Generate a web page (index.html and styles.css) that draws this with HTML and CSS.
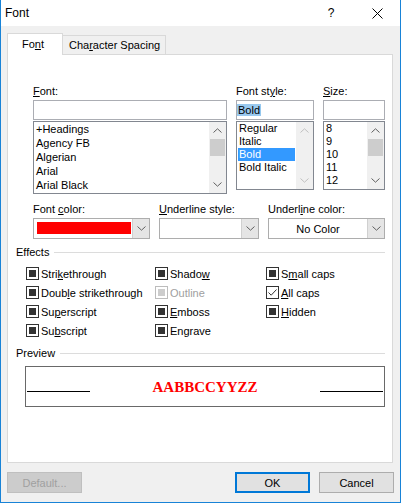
FILE: index.html
```html
<!DOCTYPE html>
<html>
<head>
<meta charset="utf-8">
<title>Font</title>
<link rel="stylesheet" href="styles.css">
</head>
<body>
<div class="window">
  <div class="titlebar">
    <span class="title">Font</span>
    <span class="tb-btn">?</span>
    <span class="tb-btn"><svg width="11" height="11" viewBox="0 0 11 11"><path d="M0.5 0.5L10.5 10.5M10.5 0.5L0.5 10.5" stroke="#000" stroke-width="1" fill="none"/></svg></span>
  </div>
  <div class="content">
    <div class="tabs">
      <div class="tab active">Fo<u>n</u>t</div>
      <div class="tab">Cha<u>r</u>acter Spacing</div>
    </div>
    <div class="panel">
      <div class="font-grid">
        <div class="field">
          <div class="lbl"><u>F</u>ont:</div>
          <div class="input"></div>
          <div class="list list-font">
            <div class="items">
              <div class="item">+Headings</div>
              <div class="item">Agency FB</div>
              <div class="item">Algerian</div>
              <div class="item">Arial</div>
              <div class="item">Arial Black</div>
            </div>
            <div class="sb">
              <div class="sb-btn"><svg width="9" height="5" viewBox="0 0 9 5"><path d="M0.5 4.5L4.5 0.8L8.5 4.5" stroke="#606060" fill="none"/></svg></div>
              <div class="sb-track"><div class="sb-thumb"></div></div>
              <div class="sb-btn"><svg width="9" height="5" viewBox="0 0 9 5"><path d="M0.5 0.5L4.5 4.2L8.5 0.5" stroke="#606060" fill="none"/></svg></div>
            </div>
          </div>
        </div>
        <div class="field">
          <div class="lbl">Font st<u>y</u>le:</div>
          <div class="input"><span class="sel">Bold</span></div>
          <div class="list list-small">
            <div class="items">
              <div class="item">Regular</div>
              <div class="item">Italic</div>
              <div class="item selected">Bold</div>
              <div class="item">Bold Italic</div>
            </div>
            <div class="sb">
              <div class="sb-btn"><svg width="9" height="5" viewBox="0 0 9 5"><path d="M0.5 4.5L4.5 0.8L8.5 4.5" stroke="#c0c0c0" fill="none"/></svg></div>
              <div class="sb-track"></div>
              <div class="sb-btn"><svg width="9" height="5" viewBox="0 0 9 5"><path d="M0.5 0.5L4.5 4.2L8.5 0.5" stroke="#c0c0c0" fill="none"/></svg></div>
            </div>
          </div>
        </div>
        <div class="field">
          <div class="lbl"><u>S</u>ize:</div>
          <div class="input"></div>
          <div class="list list-small">
            <div class="items">
              <div class="item">8</div>
              <div class="item">9</div>
              <div class="item">10</div>
              <div class="item">11</div>
              <div class="item">12</div>
            </div>
            <div class="sb">
              <div class="sb-btn"><svg width="9" height="5" viewBox="0 0 9 5"><path d="M0.5 4.5L4.5 0.8L8.5 4.5" stroke="#606060" fill="none"/></svg></div>
              <div class="sb-track"><div class="sb-thumb"></div></div>
              <div class="sb-btn"><svg width="9" height="5" viewBox="0 0 9 5"><path d="M0.5 0.5L4.5 4.2L8.5 0.5" stroke="#606060" fill="none"/></svg></div>
            </div>
          </div>
        </div>
      </div>

      <div class="combo-grid">
        <div class="field">
          <div class="lbl">Font <u>c</u>olor:</div>
          <div class="combo">
            <div class="combo-field"><span class="swatch"></span></div>
            <div class="combo-btn"><svg width="9" height="5" viewBox="0 0 9 5"><path d="M0.5 0.5L4.5 4.2L8.5 0.5" stroke="#606060" fill="none"/></svg></div>
          </div>
        </div>
        <div class="field">
          <div class="lbl"><u>U</u>nderline style:</div>
          <div class="combo">
            <div class="combo-field"></div>
            <div class="combo-btn"><svg width="9" height="5" viewBox="0 0 9 5"><path d="M0.5 0.5L4.5 4.2L8.5 0.5" stroke="#606060" fill="none"/></svg></div>
          </div>
        </div>
        <div class="field">
          <div class="lbl">Underl<u>i</u>ne color:</div>
          <div class="combo">
            <div class="combo-field">No Color</div>
            <div class="combo-btn"><svg width="9" height="5" viewBox="0 0 9 5"><path d="M0.5 0.5L4.5 4.2L8.5 0.5" stroke="#606060" fill="none"/></svg></div>
          </div>
        </div>
      </div>

      <div class="group-head"><span>Effects</span><span class="rule"></span></div>
      <div class="effects">
        <div class="cb-item"><span class="cb ind"></span><span>Stri<u>k</u>ethrough</span></div>
        <div class="cb-item"><span class="cb ind"></span><span>Shado<u>w</u></span></div>
        <div class="cb-item"><span class="cb ind"></span><span>S<u>m</u>all caps</span></div>

        <div class="cb-item"><span class="cb ind"></span><span>Doub<u>l</u>e strikethrough</span></div>
        <div class="cb-item"><span class="cb ind dis"></span><span class="dis-text">Outline</span></div>
        <div class="cb-item"><span class="cb chk"><svg width="11" height="11" viewBox="0 0 11 11"><path d="M1.5 5.5L4.2 8.2L9.5 2.5" stroke="#333" stroke-width="1" fill="none"/></svg></span><span><u>A</u>ll caps</span></div>

        <div class="cb-item"><span class="cb ind"></span><span>Su<u>p</u>erscript</span></div>
        <div class="cb-item"><span class="cb ind"></span><span><u>E</u>mboss</span></div>
        <div class="cb-item"><span class="cb ind"></span><span><u>H</u>idden</span></div>

        <div class="cb-item"><span class="cb ind"></span><span>Su<u>b</u>script</span></div>
        <div class="cb-item"><span class="cb ind"></span><span>En<u>g</u>rave</span></div>
        <div class="cb-item"></div>
      </div>

      <div class="group-head"><span>Preview</span><span class="rule"></span></div>
      <div class="preview">
        <div class="pline"></div>
        <div class="ptext">AABBCCYYZZ</div>
        <div class="pline"></div>
      </div>
    </div>

    <div class="buttons">
      <button class="btn disabled">Default...</button>
      <span class="spacer"></span>
      <button class="btn ok">OK</button>
      <button class="btn">Cancel</button>
    </div>
  </div>
</div>
</body>
</html>
```

FILE: styles.css
```css
* { box-sizing: border-box; }

body {
  margin: 0;
  font-family: "Liberation Sans", Arial, sans-serif;
  font-size: 11px;
  color: #000;
  background: #fff;
}

u { text-decoration: underline; text-underline-offset: 1px; }

.window {
  width: 401px;
  height: 503px;
  border: 1px solid #1883d7;
  border-top: 0;
  background: #f0f0f0;
  display: flex;
  flex-direction: column;
}

.titlebar {
  height: 26px;
  flex: none;
  background: #fff;
  display: flex;
  align-items: center;
  padding-left: 4px;
}

.title { flex: 1; font-size: 12px; }

.tb-btn {
  width: 46px;
  height: 26px;
  display: flex;
  align-items: center;
  justify-content: center;
  font-size: 12px;
}

.content {
  flex: 1;
  padding: 7px 7px 0 6px;
  display: flex;
  flex-direction: column;
}

.tabs {
  display: flex;
  align-items: flex-end;
  height: 21px;
  flex: none;
}

.tab {
  height: 19px;
  width: 104px;
  margin-left: -1px;
  border: 1px solid #d9d9d9;
  border-bottom: 0;
  background: #f0f0f0;
  padding-left: 6px;
  line-height: 19px;
  white-space: nowrap;
}

.tab.active {
  width: 56px;
  height: 22px;
  margin-left: 0;
  margin-bottom: -1px;
  background: #fff;
  padding-left: 14px;
  line-height: 21px;
  position: relative;
  z-index: 1;
}

.panel {
  height: 409px;
  flex: none;
  border: 1px solid #d9d9d9;
  background: #fff;
  padding: 28px 7px 0 8px;
}

.font-grid {
  display: grid;
  grid-template-columns: 194px 78px 62px;
  column-gap: 9px;
  margin-left: 17px;
}

.lbl {
  height: 16px;
  line-height: 16px;
  margin-bottom: 1px;
  white-space: nowrap;
}

.input {
  height: 20px;
  border: 1px solid #abadb3;
  margin-bottom: 1px;
  padding: 3px 0 0 0;
  background: #fff;
}

.sel {
  display: inline-block;
  height: 12px;
  line-height: 12px;
  background: #99c9ef;
  padding: 0 1px;
  vertical-align: top;
}

.list {
  display: flex;
  border: 1px solid #828790;
  background: #fff;
}

.list-font { height: 73px; }
.list-small { height: 69px; }

.items {
  flex: 1;
  padding: 0 1px;
  overflow: hidden;
  white-space: nowrap;
}

.list-font .item { height: 14px; line-height: 14px; padding-left: 1px; }
.list-small .item { height: 13px; line-height: 13px; padding-left: 1px; }

.item.selected { background: #3399ff; color: #fff; }

.sb {
  width: 17px;
  flex: none;
  display: flex;
  flex-direction: column;
  background: #f0f0f0;
}

.sb-btn {
  height: 17px;
  display: flex;
  align-items: center;
  justify-content: center;
}

.sb-btn svg { display: block; }

.sb-track { flex: 1; }

.sb-thumb {
  height: 17px;
  margin: 0 1px;
  background: #cdcdcd;
}

.combo-grid {
  display: grid;
  grid-template-columns: 117px 100px 117px;
  column-gap: 9px;
  margin: 7px 0 0 17px;
}

.combo {
  height: 21px;
  border: 1px solid #adadad;
  display: flex;
  background: #fff;
}

.combo-field {
  flex: 1;
  display: flex;
  align-items: center;
  justify-content: center;
}

.swatch {
  flex: 1;
  align-self: stretch;
  background: #ff0000;
  margin: 3px 1px 4px 3px;
}

.combo-btn {
  width: 17px;
  flex: none;
  background: #e5e5e5;
  border-left: 1px solid #d0d0d0;
  display: flex;
  align-items: center;
  justify-content: center;
}

.combo-btn svg { display: block; }

.group-head {
  display: flex;
  align-items: center;
  height: 16px;
  margin-top: 5px;
}

.rule {
  flex: 1;
  height: 1px;
  background: #dcdcdc;
  margin-left: 5px;
}

.effects {
  display: grid;
  grid-template-columns: 129px 111px 1fr;
  grid-auto-rows: 19px;
  margin: 4px 0 0 10px;
}

.cb-item {
  display: flex;
  align-items: center;
  gap: 2px;
  white-space: nowrap;
}

.cb {
  width: 13px;
  height: 13px;
  flex: none;
  border: 1px solid #333;
  background: #fff;
  padding: 2px;
}

.cb.ind::after {
  content: "";
  display: block;
  width: 7px;
  height: 7px;
  background: #333;
}

.cb.dis { border-color: #bcbcbc; }
.cb.dis::after { background: #cccccc; }

.cb.chk { padding: 0; }
.cb.chk svg { display: block; }

.dis-text { color: #a0a0a0; }

.preview {
  height: 41px;
  margin: 5px 0 0 9px;
  border: 1px solid #696969;
  padding: 11px 1px 0 1px;
  display: flex;
  align-items: baseline;
  justify-content: space-between;
}

.pline {
  width: 63px;
  height: 1px;
  background: #000;
}

.ptext {
  font-family: "Liberation Serif", "Times New Roman", serif;
  font-weight: bold;
  font-size: 15px;
  line-height: 18px;
  color: #ff0000;
}

.buttons {
  display: flex;
  gap: 9px;
  margin-top: 9px;
  margin-right: -1px;
}

.spacer { flex: 1; }

.btn {
  width: 75px;
  height: 21px;
  border: 1px solid #adadad;
  background: #e1e1e1;
  font-family: inherit;
  font-size: 11px;
  color: #000;
  padding: 0;
}

.btn.ok { border: 2px solid #0078d7; }

.btn.disabled {
  background: #cccccc;
  border-color: #bfbfbf;
  color: #a0a0a0;
}
```
